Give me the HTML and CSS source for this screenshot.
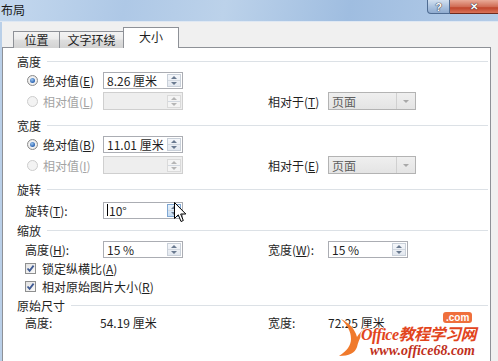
FILE: index.html
```html
<!DOCTYPE html>
<html lang="zh-CN">
<head>
    <meta charset="UTF-8">
    <title>布局</title>
    <link rel="stylesheet" href="styles.css">
</head>
<body>
    <div class="window">
        <div class="titlebar">
            <span class="title">布局</span>
            <div class="caption-buttons">
                <span class="cap-btn help">?</span>
                <span class="cap-btn close">✕</span>
            </div>
        </div>
        <div class="client">
            <div class="tabs">
                <div class="tab tab-pos">位置</div>
                <div class="tab tab-wrap">文字环绕</div>
                <div class="tab tab-size active">大小</div>
            </div>
            <div class="panel">
                <!-- 高度 -->
                <section class="group">
                    <div class="group-title"><span>高度</span></div>
                    <div class="row">
                        <label class="opt"><i class="radio on"></i>绝对值(<u>E</u>)</label>
                        <div class="spin"><span class="val">8.26 厘米</span><span class="spin-btn"><b class="up"></b><b class="down"></b></span></div>
                    </div>
                    <div class="row">
                        <label class="opt disabled"><i class="radio"></i>相对值(<u>L</u>)</label>
                        <div class="spin off"><span class="val"></span><span class="spin-btn"><b class="up"></b><b class="down"></b></span></div>
                        <span class="lbl">相对于(<u>T</u>)</span>
                        <div class="combo"><span class="val">页面</span><span class="combo-btn"><b class="down"></b></span></div>
                    </div>
                </section>

                <!-- 宽度 -->
                <section class="group">
                    <div class="group-title"><span>宽度</span></div>
                    <div class="row">
                        <label class="opt"><i class="radio on"></i>绝对值(<u>B</u>)</label>
                        <div class="spin"><span class="val">11.01 厘米</span><span class="spin-btn"><b class="up"></b><b class="down"></b></span></div>
                    </div>
                    <div class="row">
                        <label class="opt disabled"><i class="radio"></i>相对值(<u>I</u>)</label>
                        <div class="spin off"><span class="val"></span><span class="spin-btn"><b class="up"></b><b class="down"></b></span></div>
                        <span class="lbl">相对于(<u>E</u>)</span>
                        <div class="combo"><span class="val">页面</span><span class="combo-btn"><b class="down"></b></span></div>
                    </div>
                </section>

                <!-- 旋转 -->
                <section class="group">
                    <div class="group-title"><span>旋转</span></div>
                    <div class="row loose">
                        <span class="lbl indent">旋转(<u>T</u>):</span>
                        <div class="spin"><span class="val"><i class="caret"></i>10°</span><span class="spin-btn hover"><b class="up"></b><b class="down"></b></span></div>
                    </div>
                </section>

                <!-- 缩放 -->
                <section class="group tight">
                    <div class="group-title"><span>缩放</span></div>
                    <div class="row">
                        <span class="lbl indent">高度(<u>H</u>):</span>
                        <div class="spin"><span class="val">15 %</span><span class="spin-btn"><b class="up"></b><b class="down"></b></span></div>
                        <span class="lbl">宽度(<u>W</u>):</span>
                        <div class="spin"><span class="val">15 %</span><span class="spin-btn"><b class="up"></b><b class="down"></b></span></div>
                    </div>
                    <div class="row check-row">
                        <label class="opt chk"><i class="checkbox"><svg viewBox="0 0 9 9"><path d="M1.5 4.5 L3.6 6.8 L7.6 1.6" /></svg></i>锁定纵横比(<u>A</u>)</label>
                    </div>
                    <div class="row check-row">
                        <label class="opt chk"><i class="checkbox"><svg viewBox="0 0 9 9"><path d="M1.5 4.5 L3.6 6.8 L7.6 1.6" /></svg></i>相对原始图片大小(<u>R</u>)</label>
                    </div>
                </section>

                <!-- 原始尺寸 -->
                <section class="group tight">
                    <div class="group-title"><span>原始尺寸</span></div>
                    <div class="row check-row">
                        <span class="lbl indent">高度:</span>
                        <span class="info">54.19 厘米</span>
                        <span class="lbl">宽度:</span>
                        <span class="info-right">72.25 厘米</span>
                    </div>
                </section>
            </div>
        </div>

        <!-- mouse pointer over the rotate spinner -->
        <svg class="pointer" width="13" height="21" viewBox="0 0 13 21">
            <path d="M0.5 0.5 L0.5 16.5 L4.3 12.8 L7 19.5 L9.3 18.5 L6.7 12 L11.8 12 Z" fill="#fff" stroke="#000" stroke-width="1" stroke-linejoin="round"/>
        </svg>

        <!-- site watermark -->
        <div class="watermark">
            <svg class="swoosh" width="34" height="40" viewBox="0 0 34 40">
                <path d="M6 2 C14 6 20 12 22 20 C26 14 30 10 33 9 C28 14 24 22 22 30 C20 36 14 39 4 39 C12 34 16 28 16 22 C16 14 12 8 6 2 Z" fill="#f07a2c"/>
            </svg>
            <span class="wm-badge">.com</span>
            <span class="wm-title">Office教程学习网</span>
            <span class="wm-url">www.office68.com</span>
        </div>
    </div>
</body>
</html>
```

FILE: styles.css
```css
body {
    margin: 0;
    background: #fff;
}
.window {
    position: relative;
    width: 498px;
    height: 361px;
    overflow: hidden;
    background: #f0f0f0;
    font-family: "Noto Sans CJK SC", "Liberation Sans", sans-serif;
    font-size: 12px;
    color: #1f1f1f;
}
u {
    text-decoration: underline;
    text-underline-offset: 1px;
}

/* title bar */
.titlebar {
    height: 21px;
    display: flex;
    justify-content: space-between;
    align-items: flex-start;
    background: linear-gradient(100deg, #c4d8ee 0%, #aec8e6 25%, #bcd2ea 45%, #9fbde0 70%, #b4cce8 100%);
    border-bottom: 1px solid #dfe8f3;
}
.title {
    padding: 1px 0 0 1px;
    font-size: 12px;
    color: #1a1a1a;
}
.caption-buttons {
    display: flex;
    height: 14px;
}
.cap-btn {
    display: flex;
    align-items: center;
    justify-content: center;
    height: 13px;
    color: #fff;
    font-weight: bold;
    font-family: "Liberation Sans", sans-serif;
    text-shadow: 0 0 1px #223, 0 0 1px #223;
}
.help {
    width: 21px;
    font-size: 11px;
    border: 1px solid #4f6c92;
    border-top: none;
    border-radius: 0 0 0 4px;
    background: linear-gradient(#d2e0f0, #a9c1de 55%, #8fabcf);
}
.close {
    width: 48px;
    font-size: 10px;
    border-bottom: 1px solid #6e2a1e;
    background: linear-gradient(#e9aa98, #d16e57 50%, #c0452c 60%, #d9735a);
}

/* dialog client */
.client {
    padding-top: 6px;
    border-left: 2px solid #b9cfe8;
}
.tabs {
    display: flex;
    align-items: flex-end;
    height: 20px;
    padding-left: 11px;
    margin-bottom: -1px;
    position: relative;
    z-index: 1;
}
.tab {
    height: 16px;
    line-height: 15px;
    text-align: center;
    border: 1px solid #8e9197;
    border-bottom: none;
    background: linear-gradient(#f4f4f4, #ebebeb 45%, #dedede 50%, #d2d2d2);
    margin-left: -1px;
}
.tab-pos { width: 45px; margin-left: 0; }
.tab-wrap { width: 63px; }
.tab-size { width: 54px; }
.tab.active {
    height: 20px;
    line-height: 18px;
    background: #fff;
    margin-left: -1px;
}
.panel {
    width: 489px;
    height: 340px;
    border: 1px solid #8e9197;
    background: #fff;
    padding: 5px 2px 0 14px;
    box-sizing: border-box;
}

/* groups */
.group + .group {
    margin-top: 6px;
}
.group.tight {
    margin-top: 2px;
}
.group-title {
    display: flex;
    align-items: center;
    gap: 6px;
    height: 16px;
}
.group-title::after {
    content: "";
    flex: 1;
    height: 1px;
    background: #dce1e6;
}

.row {
    display: grid;
    grid-template-columns: 86px 165px 60px auto;
    align-items: center;
    height: 20px;
    margin-top: 1px;
}
.row.loose {
    margin-top: 3px;
}
.row.check-row {
    height: 18px;
    margin-top: 0;
}
.opt {
    display: flex;
    align-items: center;
    padding-left: 10px;
    white-space: nowrap;
}
.opt.chk {
    padding-left: 8px;
}
.opt.disabled {
    color: #a3a3a3;
}
.lbl {
    white-space: nowrap;
}
.lbl.indent {
    padding-left: 8px;
}
.info {
    margin-left: -3px;
    white-space: nowrap;
}
.info-right {
    white-space: nowrap;
}

/* radio + checkbox */
.radio {
    width: 11px;
    height: 11px;
    margin-right: 5px;
    border-radius: 50%;
    border: 1px solid #8a8a8a;
    box-sizing: border-box;
    background: radial-gradient(circle at 50% 50%, #f6f6f6 40%, #dcdcdc 100%);
    position: relative;
}
.radio.on::after {
    content: "";
    position: absolute;
    left: 2px;
    top: 2px;
    width: 5px;
    height: 5px;
    border-radius: 50%;
    background: radial-gradient(circle at 40% 35%, #9cc6f0, #2a62b0 70%);
}
.opt.disabled .radio {
    border-color: #cdcdcd;
    background: #f3f3f3;
}
.checkbox {
    width: 11px;
    height: 11px;
    margin-right: 6px;
    border: 1px solid #8e8f8f;
    box-sizing: border-box;
    background: linear-gradient(135deg, #e2e2e2, #fafafa);
    display: flex;
    align-items: center;
    justify-content: center;
}
.checkbox svg {
    width: 9px;
    height: 9px;
    fill: none;
    stroke: #3f5a93;
    stroke-width: 1.8;
}

/* spin boxes */
.spin {
    width: 80px;
    height: 17px;
    border: 1px solid #abadb3;
    box-sizing: border-box;
    display: flex;
    align-items: center;
    background: #fff;
}
.spin .val {
    flex: 1;
    padding-left: 3px;
    white-space: nowrap;
    display: flex;
    align-items: center;
}
.spin.off {
    height: 18px;
    background: #eeeeee;
    border-color: #cfcfcf;
}
.spin-btn {
    width: 14px;
    height: 13px;
    margin-right: 1px;
    border: 1px solid #c9d0d9;
    box-sizing: border-box;
    background: linear-gradient(#f5f7fa, #e3e8ef);
    display: flex;
    flex-direction: column;
}
.spin-btn b {
    flex: 1;
    display: flex;
    align-items: center;
    justify-content: center;
}
.spin-btn b + b {
    border-top: 1px solid #d2d8e0;
}
.spin-btn .up::after {
    content: "";
    border-left: 3px solid transparent;
    border-right: 3px solid transparent;
    border-bottom: 3px solid #6a7a90;
}
.spin-btn .down::after,
.combo-btn .down::after {
    content: "";
    border-left: 3px solid transparent;
    border-right: 3px solid transparent;
    border-top: 3px solid #6a7a90;
}
.spin.off .spin-btn {
    background: #f4f4f4;
    border-color: #dadada;
}
.spin.off .spin-btn b::after {
    border-top-color: #b5b5b5;
    border-bottom-color: #b5b5b5;
}
.spin-btn.hover {
    border-color: #7fa7d3;
    background: linear-gradient(#e8f2fb, #c6dcf2);
}
.caret {
    display: inline-block;
    width: 1px;
    height: 12px;
    background: #000;
    margin-right: 1px;
}

/* drop-down */
.combo {
    width: 88px;
    height: 18px;
    border: 1px solid #b3b3b3;
    box-sizing: border-box;
    display: flex;
    align-items: center;
    background: linear-gradient(#efefef, #e4e4e4);
    color: #5f5f5f;
}
.combo .val {
    flex: 1;
    padding-left: 3px;
}
.combo-btn {
    width: 18px;
    height: 16px;
    border-left: 1px solid #d0d0d0;
    display: flex;
    align-items: center;
    justify-content: center;
}
.combo-btn b {
    display: flex;
}
.combo-btn .down::after {
    border-top-color: #a8a8a8;
}

/* overlays */
.pointer {
    position: absolute;
    left: 174px;
    top: 202px;
}
.watermark {
    position: absolute;
    left: 334px;
    top: 310px;
    width: 164px;
    height: 51px;
}
.swoosh {
    position: absolute;
    left: 1px;
    top: 7px;
}
.wm-badge {
    position: absolute;
    left: 109px;
    top: 2px;
    padding: 0 3px;
    height: 11px;
    line-height: 11px;
    border-radius: 3px;
    background: #ef6f3c;
    color: #fff;
    font-family: "Liberation Sans", sans-serif;
    font-size: 10px;
    font-weight: bold;
}
.wm-title {
    position: absolute;
    left: 27px;
    top: 17px;
    line-height: 16px;
    font-family: "Liberation Serif", "Noto Sans CJK SC", serif;
    font-size: 16px;
    font-weight: bold;
    font-style: italic;
    color: #e2451d;
    letter-spacing: -0.5px;
    white-space: nowrap;
    text-shadow: 1px 0 #fff, -1px 0 #fff, 0 1px #fff, 0 -1px #fff;
}
.wm-url {
    position: absolute;
    left: 36px;
    top: 34px;
    line-height: 14px;
    font-family: "Liberation Serif", serif;
    font-size: 14px;
    font-weight: bold;
    font-style: italic;
    color: #c0301c;
    white-space: nowrap;
    text-shadow: 1px 0 #fff, -1px 0 #fff, 0 1px #fff;
}
```
